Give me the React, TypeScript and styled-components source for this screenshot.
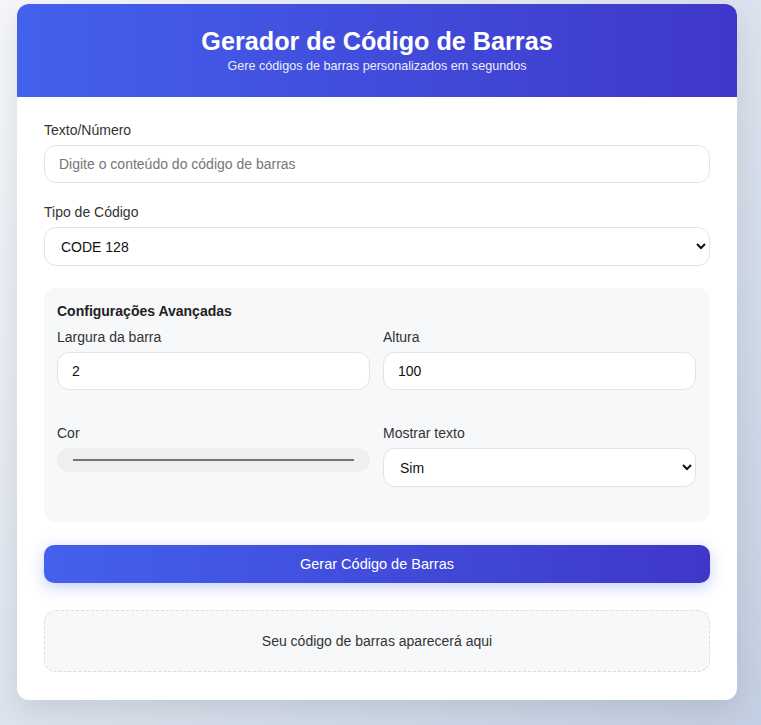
import React from "react";
import styled, { createGlobalStyle } from "styled-components";

const GlobalStyle = createGlobalStyle`
  html, body { margin: 0; padding: 0; }
  body {
    min-height: 725px;
    background: linear-gradient(135deg, #f5f7fa 0%, #c3cfe2 100%);
    font-family: "Liberation Sans", Arial, sans-serif;
    color: #333;
  }
  * { box-sizing: border-box; }
`;

const Page = styled.div`
  padding: 4px 24px 25px 17px;
`;

const Card = styled.div`
  width: 720px;
  background: #fff;
  border-radius: 12px;
  overflow: hidden;
  box-shadow: 0 10px 30px rgba(0, 0, 0, 0.1);
`;

const Header = styled.header`
  height: 93px;
  background: linear-gradient(90deg, #4361ee 0%, #3f37c9 100%);
  color: #fff;
  display: flex;
  flex-direction: column;
  align-items: center;
  justify-content: center;
  padding-bottom: 2px;
`;

const Title = styled.h1`
  margin: 0;
  font-size: 25.2px;
  font-weight: 700;
  line-height: 30px;
`;

const Subtitle = styled.p`
  margin: 3px 0 0;
  font-size: 12.6px;
  line-height: 15px;
  opacity: 0.9;
`;

const Body = styled.div`
  padding: 25px 27px 28px;
  display: flex;
  flex-direction: column;
`;

const Group = styled.div<{ $mb?: number }>`
  display: flex;
  flex-direction: column;
  margin-bottom: ${(p) => p.$mb ?? 20}px;
`;

const Label = styled.label`
  font-size: 14px;
  line-height: 16px;
  color: #333;
  margin-bottom: 7px;
`;

const fieldStyles = `
  width: 100%;
  height: 38px;
  padding: 0 14px;
  border: 1px solid #e3e3e3;
  border-radius: 12px;
  background: #fff;
  font-family: "Liberation Sans", Arial, sans-serif;
  font-size: 14px;
  color: #111;
  outline: none;
`;

const Input = styled.input`
  ${fieldStyles}
  &::placeholder { color: #767676; }
`;

const Select = styled.select`
  ${fieldStyles}
  height: 39px;
  padding: 0 8px 0 12px;
`;

const Advanced = styled.section`
  background: #f7f8fa;
  border-radius: 12px;
  padding: 15px 14px 15px 13px;
  margin-bottom: 23px;
`;

const AdvTitle = styled.h3`
  margin: 0 0 10px;
  font-size: 14px;
  line-height: 16px;
  font-weight: 700;
  color: #222;
`;

const Grid = styled.div`
  display: grid;
  grid-template-columns: 1fr 1fr;
  column-gap: 13px;
  row-gap: 15px;
`;

const ColorSwatch = styled.div`
  height: 24px;
  border-radius: 12px;
  background: #efefef;
  display: flex;
  align-items: center;
  padding: 0 16px;
`;

const SwatchLine = styled.span`
  flex: 1;
  height: 2px;
  background: #767676;
`;

const Button = styled.button`
  height: 38px;
  flex-shrink: 0;
  border: none;
  border-radius: 10px;
  background: linear-gradient(90deg, #4361ee 0%, #3f37c9 100%);
  color: #fff;
  font-family: "Liberation Sans", Arial, sans-serif;
  font-size: 14.5px;
  box-shadow: 0 4px 15px rgba(67, 97, 238, 0.3);
  margin-bottom: 27px;
  cursor: pointer;
`;

const Result = styled.div`
  height: 62px;
  flex-shrink: 0;
  border: 1px dashed #dddddd;
  border-radius: 12px;
  background: #f7f8fa;
  display: flex;
  align-items: center;
  justify-content: center;
  font-size: 14px;
  color: #333;
`;

export default function App() {
  return (
    <>
      <GlobalStyle />
      <Page>
        <Card>
          <Header>
            <Title>Gerador de Código de Barras</Title>
            <Subtitle>Gere códigos de barras personalizados em segundos</Subtitle>
          </Header>
          <Body>
            <Group $mb={21}>
              <Label>Texto/Número</Label>
              <Input placeholder="Digite o conteúdo do código de barras" />
            </Group>
            <Group $mb={22}>
              <Label>Tipo de Código</Label>
              <Select defaultValue="CODE128">
                <option value="CODE128">CODE 128</option>
                <option value="EAN13">EAN-13</option>
                <option value="UPC">UPC</option>
              </Select>
            </Group>
            <Advanced>
              <AdvTitle>Configurações Avançadas</AdvTitle>
              <Grid>
                <Group>
                  <Label>Largura da barra</Label>
                  <Input defaultValue="2" />
                </Group>
                <Group>
                  <Label>Altura</Label>
                  <Input defaultValue="100" />
                </Group>
                <Group>
                  <Label>Cor</Label>
                  <ColorSwatch>
                    <SwatchLine />
                  </ColorSwatch>
                </Group>
                <Group>
                  <Label>Mostrar texto</Label>
                  <Select defaultValue="sim">
                    <option value="sim">Sim</option>
                    <option value="nao">Não</option>
                  </Select>
                </Group>
              </Grid>
            </Advanced>
            <Button>Gerar Código de Barras</Button>
            <Result>Seu código de barras aparecerá aqui</Result>
          </Body>
        </Card>
      </Page>
    </>
  );
}
